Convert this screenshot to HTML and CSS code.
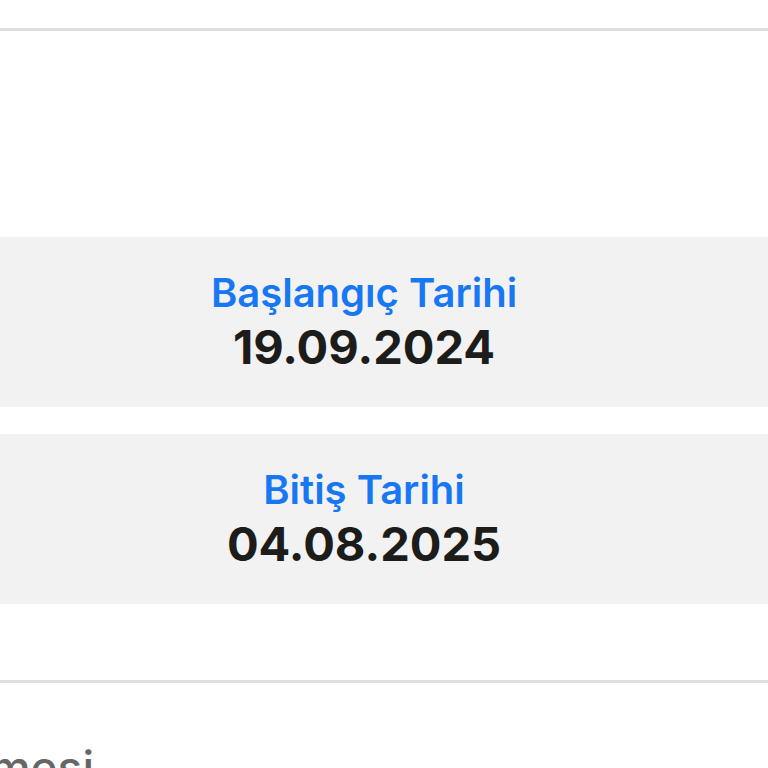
FILE: index.html
```html
<!DOCTYPE html>
<html lang="tr">
<head>
    <meta charset="UTF-8">
    <meta name="viewport" content="width=device-width, initial-scale=1.0">
    <title>Tarih Bilgisi</title>
    <link rel="stylesheet" href="styles.css">
</head>
<body>
    <hr class="divider top">

    <main class="dates">
        <div class="date-card">
            <span class="date-label">Başlangıç Tarihi</span>
            <span class="date-value">19.09.2024</span>
        </div>
        <div class="date-card">
            <span class="date-label">Bitiş Tarihi</span>
            <span class="date-value">04.08.2025</span>
        </div>
    </main>

    <hr class="divider bottom">

    <section class="next-section">
        <h2 class="section-title">Yenilemesi</h2>
    </section>
</body>
</html>
```

FILE: styles.css
```css
/* === Theme === */
:root {
    --primary: #1877f2;
    --text: #1c1c1a;
    --muted: #666666;
    --card-bg: #f2f2f2;
    --line: #dedede;
}

/* === Layout === */
body {
    font-family: 'Inter', 'Liberation Sans', sans-serif;
    margin: 0;
    padding: 0;
    background: #ffffff;
    color: var(--text);
    overflow: hidden;
}

.divider {
    border: none;
    height: 3px;
    background: var(--line);
    margin: 0;
}

.divider.top {
    margin-top: 28px;
}

.dates {
    display: flex;
    flex-direction: column;
    gap: 27px;
    padding-top: 206px;
    padding-bottom: 76px;
}

/* === Components === */
.date-card {
    background: var(--card-bg);
    height: 170px;
    padding-right: 40px;
    display: flex;
    flex-direction: column;
    align-items: center;
    justify-content: center;
    gap: 4px;
}

.date-label {
    color: var(--primary);
    font-size: 40px;
    font-weight: 600;
    line-height: 46px;
}

.date-value {
    font-size: 47px;
    font-weight: 700;
    line-height: 54px;
}

.next-section {
    width: 94px;
    overflow: hidden;
    display: flex;
    justify-content: flex-end;
    padding-top: 56px;
}

.section-title {
    margin: 0;
    white-space: nowrap;
    font-size: 46px;
    font-weight: 500;
    color: var(--muted);
}
```
